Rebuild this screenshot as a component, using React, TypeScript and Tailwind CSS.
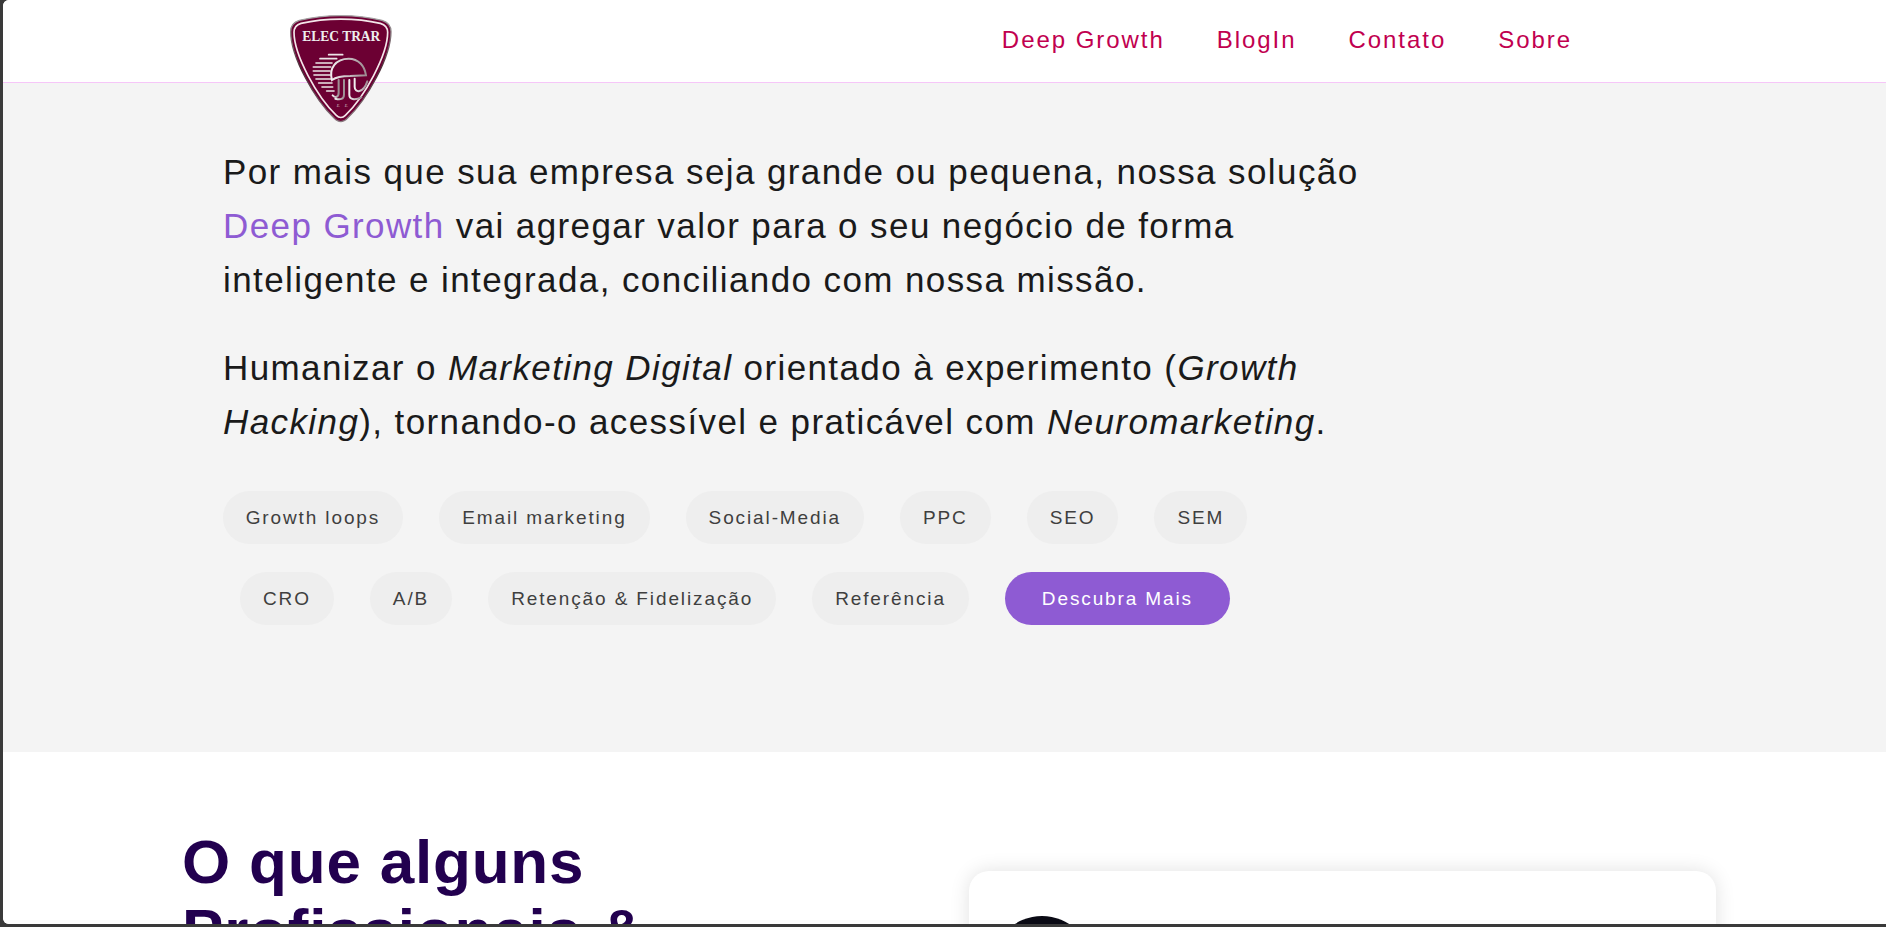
const font = "font-['Liberation_Sans',Arial,sans-serif]"

const navLinks = ['Deep Growth', 'BlogIn', 'Contato', 'Sobre']
const chips = [
  'Growth loops',
  'Email marketing',
  'Social-Media',
  'PPC',
  'SEO',
  'SEM',
  'CRO',
  'A/B',
  'Retenção & Fidelização',
  'Referência',
]

function Logo() {
  return (
    <svg
      viewBox="0 0 450 405"
      className="absolute left-[267px] top-0 z-10 h-[135px] w-[150px]"
    >
      <defs>
        <linearGradient id="rim" x1="0" y1="0" x2="0" y2="1">
          <stop offset="0" stopColor="#a8a8a8" />
          <stop offset="0.5" stopColor="#4a2a35" />
          <stop offset="1" stopColor="#8a7a80" />
        </linearGradient>
        <linearGradient id="helmet" x1="0" y1="0" x2="1" y2="0">
          <stop offset="0" stopColor="#f2eef0" />
          <stop offset="1" stopColor="#9c8c92" />
        </linearGradient>
      </defs>
      <path
        d="M62 95C62 75 72 66 88 61C165 42 260 42 336 61C352 66 363 75 363 95C363 170 290 300 232 355C220 368 205 368 193 355C135 300 62 170 62 95Z"
        fill="#6c0033"
        stroke="url(#rim)"
        strokeWidth="4"
      />
      <path
        d="M72 97C72 82 80 74 93 70C167 53 258 53 331 70C344 74 353 82 353 97C353 165 283 292 226 346C218 354 207 354 199 346C142 292 72 165 72 97Z"
        fill="none"
        stroke="#f4e6ea"
        strokeWidth="5"
      />
      <text
        x="214"
        y="122"
        textAnchor="middle"
        fill="#eeeeee"
        fontFamily="'Liberation Serif',serif"
        fontWeight="700"
        fontSize="42"
        textLength="234"
        lengthAdjust="spacingAndGlyphs"
      >
        ELEC TRAR
      </text>
      <g stroke="#ece6e8" strokeWidth="5" strokeLinecap="round" fill="none">
        <path d="M176 164H218" />
        <path d="M150 176H200" />
        <path d="M138 189H186" />
        <path d="M130 201H182" />
        <path d="M130 213H180" />
        <path d="M132 225H180" />
        <path d="M138 237H182" />
        <path d="M146 249H186" />
        <path d="M156 261H188" />
        <path d="M170 273H192" />
      </g>
      <g stroke="url(#helmet)" strokeWidth="6" strokeLinecap="round" fill="none">
        <path d="M186 240C176 205 198 176 236 176C266 176 284 198 288 226L240 228C222 228 200 230 186 240Z" />
        <path d="M206 240V278C206 292 196 294 188 286" />
        <path d="M222 240V284C222 298 210 300 196 296" />
        <path d="M238 240V284C238 298 254 302 274 292" />
        <path d="M254 236V260C254 280 280 280 292 244" />
      </g>
      <text x="200" y="322" fill="#d8c8ce" fontSize="12" fontStyle="italic" fontFamily="'Liberation Serif',serif">
        E.
      </text>
      <text x="224" y="322" fill="#d8c8ce" fontSize="12" fontStyle="italic" fontFamily="'Liberation Serif',serif">
        E.
      </text>
    </svg>
  )
}

export default function App() {
  return (
    <div className={`h-[927px] overflow-hidden bg-[#3a3a3a] pb-[3px] pl-[3px] ${font}`}>
      <div className="relative h-full overflow-hidden rounded-l-[6px] bg-white">
        <header className="flex h-[83px] items-center justify-end border-b border-[#f6c6f8] bg-white pb-[2px] pr-[314px]">
          <Logo />
          <nav className="flex gap-[52px] text-[24px] tracking-[1.95px] text-[#c1004f]">
            {navLinks.map(l => (
              <a key={l}>{l}</a>
            ))}
          </nav>
        </header>

        <section className="h-[669px] bg-[#f4f4f4] pl-[220px] pt-[62px] text-[35px] leading-[54px] tracking-[1.4px] text-[#1a1a1a]">
          <p className="w-[1180px]">
            Por mais que sua empresa seja grande ou pequena, nossa solução{' '}
            <span className="text-[#8e5bd3]">Deep Growth</span> vai agregar valor para o seu
            negócio de forma inteligente e integrada, conciliando com nossa missão.
          </p>
          <p className="mt-[34px] w-[1180px]">
            Humanizar o <em>Marketing Digital</em> orientado à experimento (<em>Growth Hacking</em>
            ), tornando-o acessível e praticável com <em>Neuromarketing</em>.
          </p>
          <div className="ml-[-18px] mt-[42px] flex w-[1060px] flex-wrap justify-center gap-x-9 gap-y-[28px]">
            {chips.map(c => (
              <span
                key={c}
                className="flex h-[53px] items-center rounded-full bg-[#eeeeee] px-[23px] text-[19px] tracking-[1.88px] text-[#3f3f3f]"
              >
                {c}
              </span>
            ))}
            <span className="flex h-[53px] items-center rounded-full bg-[#8e5bd3] px-[37px] text-[19px] tracking-[1.88px] text-white">
              Descubra Mais
            </span>
          </div>
        </section>

        <section className="flex bg-white pl-[179px] pt-[75px]">
          <h2 className="w-[787px] text-[62px] font-bold leading-[69px] tracking-[0.8px] text-[#22004f]">
            O que alguns
            <br />
            Profissionais &
          </h2>
          <div className="mt-[44px] h-[400px] w-[747px] rounded-[20px] bg-white pl-[23px] pt-[45px] shadow-[0_0_20px_rgba(0,0,0,0.12)]">
            <div className="h-[100px] w-[100px] rounded-full bg-[#0a0a14]" />
          </div>
        </section>
      </div>
    </div>
  )
}
